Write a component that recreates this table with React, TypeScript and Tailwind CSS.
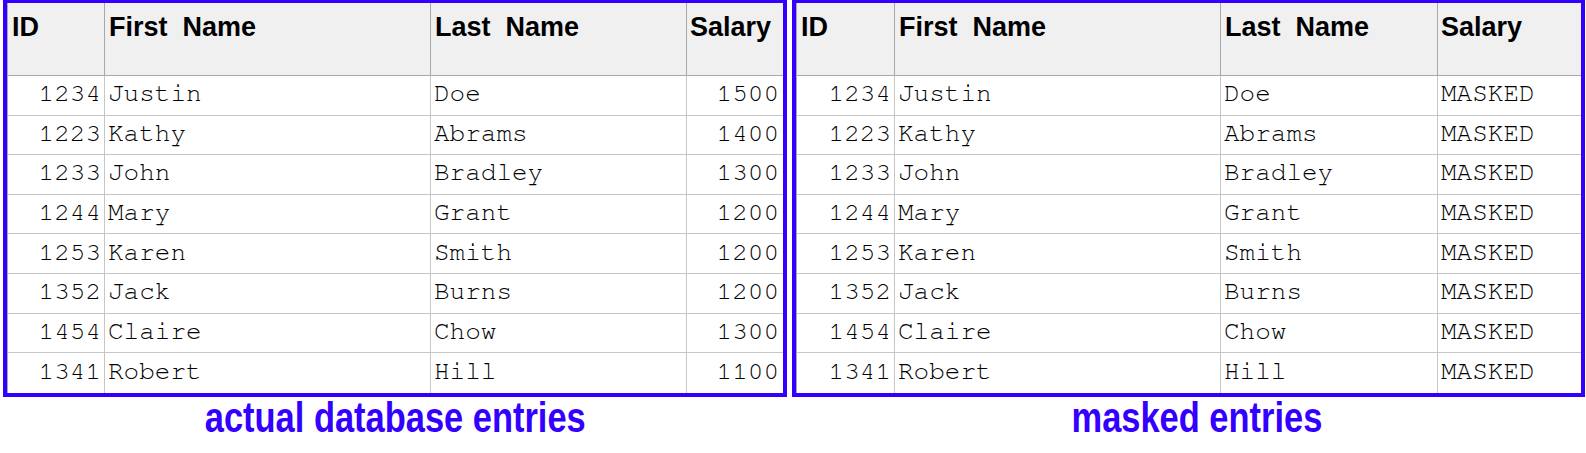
const rows = [
  { id: '1234', first: 'Justin', last: 'Doe', salary: '1500' },
  { id: '1223', first: 'Kathy', last: 'Abrams', salary: '1400' },
  { id: '1233', first: 'John', last: 'Bradley', salary: '1300' },
  { id: '1244', first: 'Mary', last: 'Grant', salary: '1200' },
  { id: '1253', first: 'Karen', last: 'Smith', salary: '1200' },
  { id: '1352', first: 'Jack', last: 'Burns', salary: '1200' },
  { id: '1454', first: 'Claire', last: 'Chow', salary: '1300' },
  { id: '1341', first: 'Robert', last: 'Hill', salary: '1100' },
];

type Widths = { id: string; first: string; last: string; salary: string };

const mono = '"Nimbus Mono PS", "FreeMono", "Courier New", "Liberation Mono", monospace';

function Table({ masked, w }: { masked?: boolean; w: Widths }) {
  const head = "h-[73px] border-b border-[#a8a8a8] bg-[#f0f0f0] flex";
  const hcell = "border-r border-[#a8a8a8] pt-[4px] pl-[4px] whitespace-pre font-bold text-[27px] text-black";
  const cell = "border-r border-[#c6c6c6] flex items-center px-[3px] pb-[3px] text-[26px] text-black";
  return (
    <div className="border-x-4 border-b-4 border-t-[3px] border-[#3300ff] bg-white">
      <div className="border-l border-[#a8a8a8]">
        <div className={head} style={{ fontFamily: '"Liberation Sans", Arial, sans-serif' }}>
          <div className={`${hcell} ${w.id}`}>ID</div>
          <div className={`${hcell} ${w.first}`}>First  Name</div>
          <div className={`${hcell} ${w.last}`}>Last  Name</div>
          <div className={`pt-[4px] pl-[3px] font-bold text-[27px] text-black ${w.salary}`}>Salary</div>
        </div>
        {rows.map((r, i) => (
          <div
            key={r.id}
            className={`h-[39.6px] flex ${i < rows.length - 1 ? 'border-b border-[#c6c6c6]' : ''}`}
            style={{ fontFamily: mono }}
          >
            <div className={`${cell} justify-end ${w.id}`}>{r.id}</div>
            <div className={`${cell} ${w.first}`}>{r.first}</div>
            <div className={`${cell} ${w.last}`}>{r.last}</div>
            <div className={`flex items-center pb-[3px] text-[26px] text-black ${masked ? 'pl-[3px]' : 'justify-end pr-[4px]'} ${w.salary}`}>
              {masked ? 'MASKED' : r.salary}
            </div>
          </div>
        ))}
      </div>
    </div>
  );
}

function Caption({ text, shift }: { text: string; shift?: string }) {
  return (
    <div className={`mt-[3px] flex justify-center ${shift ?? ''}`}>
      <span
        className="inline-block text-[42px] leading-[36px] font-bold text-[#3300ff] scale-x-[0.82]"
        style={{ fontFamily: '"Liberation Sans", Arial, sans-serif' }}
      >
        {text}
      </span>
    </div>
  );
}

export default function App() {
  return (
    <div className="w-[1586px] h-[453px] bg-white flex gap-[5px] pl-[3px]">
      <div className="w-[784px] flex flex-col">
        <Table w={{ id: 'w-[97px]', first: 'w-[326px]', last: 'w-[256px]', salary: 'w-[96px]' }} />
        <Caption text="actual database entries" />
      </div>
      <div className="w-[793px] flex flex-col">
        <Table masked w={{ id: 'w-[98px]', first: 'w-[326px]', last: 'w-[217px]', salary: 'w-[143px]' }} />
        <Caption text="masked entries" shift="pl-[16px]" />
      </div>
    </div>
  );
}
